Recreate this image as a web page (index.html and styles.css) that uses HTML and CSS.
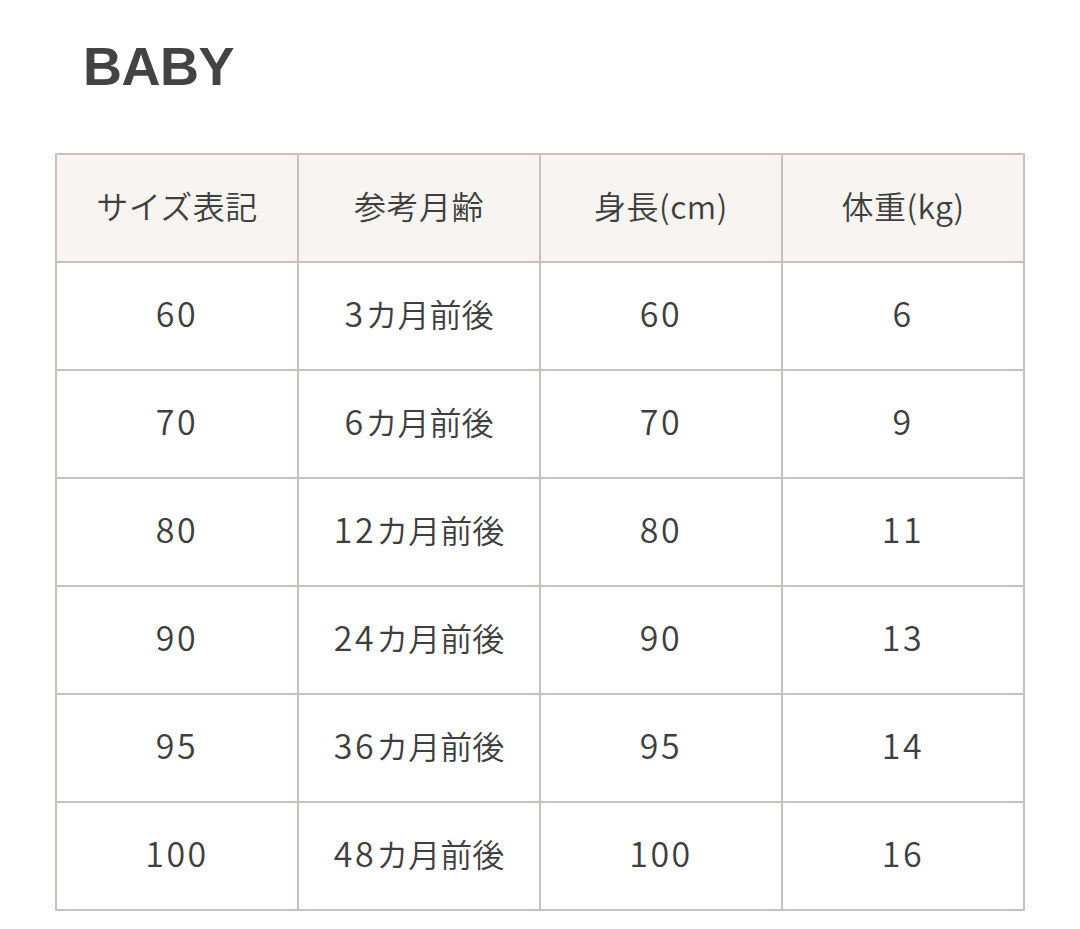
FILE: index.html
```html
<!DOCTYPE html>
<html lang="ja">
<head>
<meta charset="utf-8">
<link rel="stylesheet" href="styles.css">
</head>
<body>
<div class="page">
  <h1 class="title">BABY</h1>
  <table class="size-table">
    <thead>
      <tr><th>サイズ表記</th><th>参考月齢</th><th>身長(cm)</th><th>体重(kg)</th></tr>
    </thead>
    <tbody>
      <tr><td><span class="num">60</span></td><td><span class="num">3</span>カ月前後</td><td><span class="num">60</span></td><td><span class="num">6</span></td></tr>
      <tr><td><span class="num">70</span></td><td><span class="num">6</span>カ月前後</td><td><span class="num">70</span></td><td><span class="num">9</span></td></tr>
      <tr><td><span class="num">80</span></td><td><span class="num">12</span>カ月前後</td><td><span class="num">80</span></td><td><span class="num">11</span></td></tr>
      <tr><td><span class="num">90</span></td><td><span class="num">24</span>カ月前後</td><td><span class="num">90</span></td><td><span class="num">13</span></td></tr>
      <tr><td><span class="num">95</span></td><td><span class="num">36</span>カ月前後</td><td><span class="num">95</span></td><td><span class="num">14</span></td></tr>
      <tr><td><span class="num">100</span></td><td><span class="num">48</span>カ月前後</td><td><span class="num">100</span></td><td><span class="num">16</span></td></tr>
    </tbody>
  </table>
</div>
</body>
</html>
```
FILE: styles.css
```css
html, body {
  margin: 0;
  padding: 0;
  background: #ffffff;
}
.page {
  padding: 39px 0 0 55px;
  color: #404040;
}
.title {
  margin: 0 0 60px 28px;
  font-family: "Liberation Sans", sans-serif;
  font-size: 54px;
  line-height: 54px;
  font-weight: 700;
  color: #434343;
  letter-spacing: -0.5px;
}
.size-table {
  border-collapse: collapse;
  width: 970px;
  table-layout: fixed;
}
.size-table th,
.size-table td {
  border: 2px solid #c9c1bd;
  height: 100px;
  padding: 0 0 6px 0;
  text-align: center;
  vertical-align: middle;
  font-family: "Noto Sans CJK JP", sans-serif;
  font-size: 32px;
  line-height: 40px;
  font-weight: 350;
  color: #3e3e3e;
}
.size-table th {
  background: #f8f4f1;
  letter-spacing: 0.5px;
}
.num {
  font-size: 34px;
  letter-spacing: 2.5px;
}
```
